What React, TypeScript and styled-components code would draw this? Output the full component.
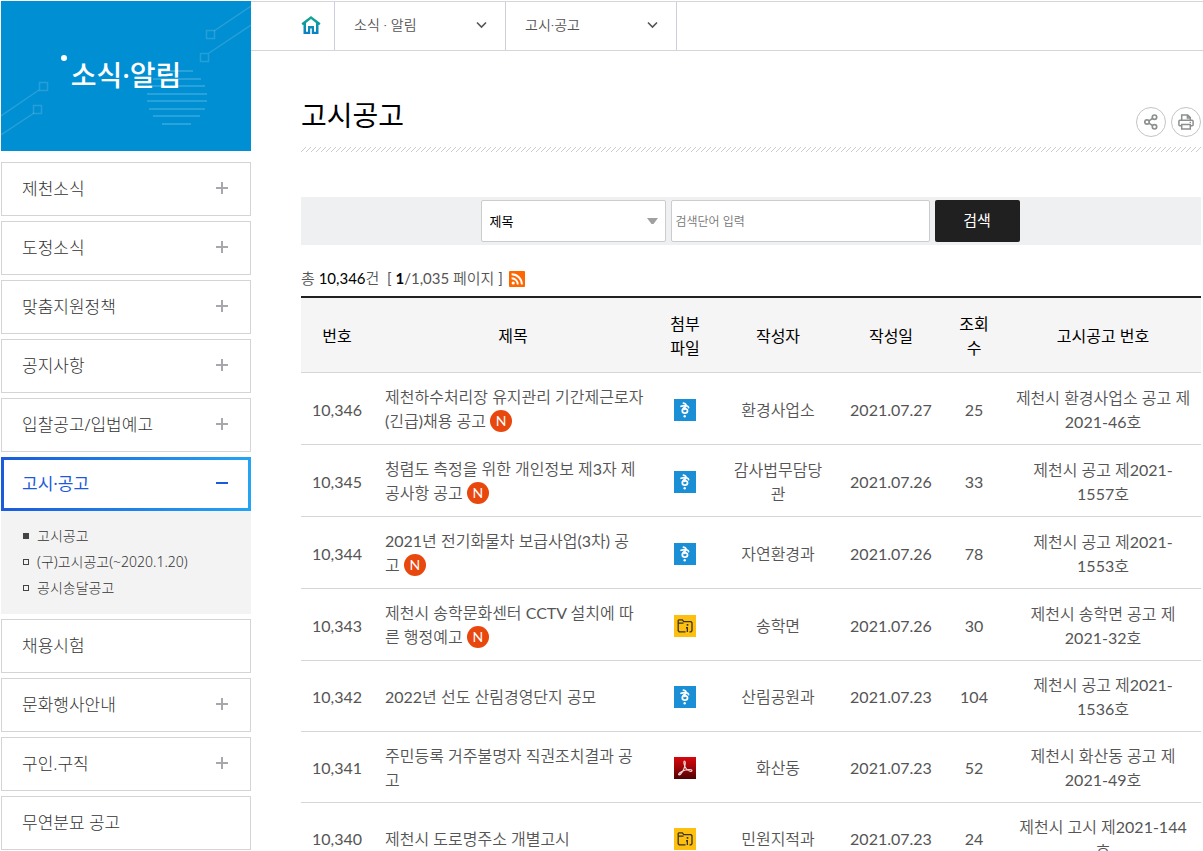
import React from "react";
import styled, { createGlobalStyle, css } from "styled-components";

const latoStack = `Lato, "Noto Sans CJK KR DemiLight", "Noto Sans CJK KR", sans-serif`;
const notoStack = `"Noto Sans", "Noto Sans CJK KR", sans-serif`;

const GlobalStyle = createGlobalStyle`
  *, *::before, *::after { box-sizing: border-box; }
  body {
    margin: 0;
    background: #fff;
    color: #555;
    font: 400 16px/24px ${latoStack};
  }
  a { color: inherit; text-decoration: none; }
  ul { list-style: none; margin: 0; padding: 0; }
  button, input, select { font-family: inherit; }
  svg { display: block; }
`;

const Page = styled.div`
  display: flex;
  align-items: flex-start;
  padding: 1px 0 0 1px;
`;

/* ---------- sidebar ---------- */

const Sidebar = styled.aside`
  flex: 0 0 250px;
  font-family: ${notoStack};
  font-weight: 300;
`;

const Banner = styled.div`
  position: relative;
  display: flex;
  align-items: center;
  justify-content: center;
  height: 150px;
  margin-bottom: 11px;
  padding-bottom: 2px;
  background: #008fd3;
`;

const BannerArt = styled.svg`
  position: absolute;
  inset: 0;
`;

const BannerTitle = styled.h2`
  position: relative;
  margin: 0;
  color: #fff;
  font-size: 28px;
  line-height: 40px;
  font-weight: 500;
`;

const Menu = styled.ul`
  display: flex;
  flex-direction: column;
  gap: 5px;
`;

const MenuLink = styled.a<{ $active?: boolean }>`
  display: flex;
  align-items: center;
  justify-content: space-between;
  height: 54px;
  padding: 0 22px 0 20px;
  border: 1px solid #d4d4d6;
  color: #333;
  font-size: 17px;
  line-height: 24px;
  & > svg { margin-bottom: 2px; }
  ${(p) =>
    p.$active &&
    css`
      padding: 0 19px 0 18px;
      border: 3px solid transparent;
      background: linear-gradient(#fff, #fff) padding-box,
        linear-gradient(to right, #1b5bdb, #23a4f5) border-box;
      color: #1b5bdb;
      font-weight: 400;
    `}
`;

const SubMenu = styled.ul`
  padding: 12px 22px 13px;
  background: #f3f3f3;
`;

const SubLink = styled.a<{ $current?: boolean }>`
  display: flex;
  align-items: center;
  gap: 8px;
  color: #333;
  font-size: 14px;
  line-height: 26px;
  &::before {
    content: "";
    width: 6px;
    height: 6px;
    border: 1px solid #444;
    background: ${(p) => (p.$current ? "#444" : "transparent")};
  }
`;

/* ---------- main ---------- */

const Main = styled.main`
  flex: 1;
  min-width: 0;
`;

const Crumbs = styled.nav`
  display: flex;
  height: 50px;
  border: solid #d5d6d9;
  border-width: 1px 0;
`;

const HomeLink = styled.a`
  display: flex;
  align-items: center;
  padding: 0 13px 2px 50px;
  border-right: 1px solid #cdd0dc;
`;

const Crumb = styled.button`
  display: flex;
  align-items: center;
  justify-content: space-between;
  width: 171px;
  padding: 0 18px 2px 19px;
  border: 0;
  border-right: 1px solid #cdd0dc;
  background: none;
  color: #555;
  font-size: 14px;
  font-weight: 300;
  line-height: 24px;
`;

const Content = styled.div`
  padding: 0 2px 0 50px;
`;

const TitleBar = styled.header`
  display: flex;
  align-items: flex-end;
  justify-content: space-between;
  padding: 42px 0 10px;
  margin-bottom: 45px;
  position: relative;
  &::after {
    content: "";
    position: absolute;
    left: 0;
    right: 0;
    top: 100%;
    height: 5px;
    background: linear-gradient(135deg, transparent 42%, #ccc 42%, #ccc 58%, transparent 58%) 0 0 / 5px 5px;
  }
`;

const PageTitle = styled.h1`
  margin: 0;
  color: #000;
  font-family: ${notoStack};
  font-size: 28px;
  line-height: 44px;
  font-weight: 400;
`;

const Tools = styled.div`
  display: flex;
  gap: 5px;
`;

const RoundButton = styled.button`
  display: flex;
  align-items: center;
  justify-content: center;
  width: 30px;
  height: 30px;
  padding: 0;
  border: 1px solid #c4c4c4;
  border-radius: 50%;
  background: #fff;
`;

const SearchBar = styled.form`
  display: flex;
  align-items: center;
  justify-content: center;
  gap: 5px;
  height: 48px;
  margin-top: 50px;
  padding-right: 2px;
  background: #eff0f2;
`;

const SelectWrap = styled.div`
  display: grid;
  align-items: center;
  width: 185px;
  & > * { grid-area: 1 / 1; }
  & > svg { justify-self: end; margin-right: 8px; pointer-events: none; }
`;

const FieldSelect = styled.select`
  appearance: none;
  width: 100%;
  height: 42px;
  padding: 0 8px;
  border: 1px solid #ccc;
  border-radius: 2px;
  background: #fff;
  color: #000;
  font-family: ${notoStack};
  font-size: 13px;
  font-weight: 400;
`;

const SearchInput = styled.input`
  width: 259px;
  height: 42px;
  padding: 0 4px;
  border: 1px solid #ccc;
  border-radius: 2px;
  background: #fff;
  font-size: 12px;
  font-weight: 400;
  &::placeholder { color: #757575; }
`;

const SearchButton = styled.button`
  width: 85px;
  height: 42px;
  padding: 0 0 3px;
  border: 0;
  border-radius: 2px;
  background: #202020;
  color: #fff;
  font-family: ${notoStack};
  font-size: 15px;
  font-weight: 400;
`;

const Total = styled.div`
  display: flex;
  align-items: center;
  gap: 6px;
  margin: 21px 0 5px;
  font-size: 15px;
  line-height: 24px;
  white-space: pre;
  & > span { padding-bottom: 1px; }
`;

const Count = styled.span`
  color: #000;
`;

const Current = styled.strong`
  color: #000;
  font-weight: 700;
`;

const Board = styled.table`
  width: 100%;
  table-layout: fixed;
  border-collapse: separate;
  border-spacing: 0;
  border-top: 2px solid #202020;
`;

const Col = styled.col<{ $w?: number }>`
  width: ${(p) => (p.$w ? p.$w + "px" : "auto")};
`;

const Th = styled.th`
  padding: 14px 10px 12px;
  border-bottom: 1px solid #d6d6d6;
  background: #f5f5f5;
  color: #000;
  font-family: Lato, "Noto Sans CJK KR", sans-serif;
  font-weight: 400;
`;

const Td = styled.td<{ $left?: boolean }>`
  padding: ${(p) => (p.$left ? "12px 7px 10px 12px" : "12px 10px 10px")};
  border-bottom: 1px solid #d6d6d6;
  text-align: ${(p) => (p.$left ? "left" : "center")};
  & > svg { margin: 0 auto; }
`;

const NoticeLink = styled.a`
  white-space: pre-line;
`;

const NewBadge = styled.span`
  display: inline-block;
  width: 22px;
  height: 22px;
  margin: 1px 0 2px;
  border-radius: 50%;
  background: #e8470e;
  color: #fff;
  font-size: 14px;
  line-height: 22px;
  text-align: center;
  vertical-align: top;
`;

/* ---------- icons ---------- */

const Plus = () => (
  <svg width="12" height="12" viewBox="0 0 12 12" aria-hidden="true">
    <path d="M5 0h2v12H5zM0 5h12v2H0z" fill="#a6a8ac" />
  </svg>
);

const Minus = () => (
  <svg width="13" height="12" viewBox="0 0 13 12" aria-hidden="true">
    <path d="M0 5h12v2H0z" fill="#1b5bdb" />
  </svg>
);

const Chevron = () => (
  <svg width="11" height="8" viewBox="0 0 11 8" aria-hidden="true">
    <path d="M1 1.5l4.5 4.5L10 1.5" fill="none" stroke="#555" strokeWidth="1.6" />
  </svg>
);

const HomeIcon = () => (
  <svg width="20" height="18" viewBox="0 0 20 18" role="img" aria-label="홈">
    <defs>
      <linearGradient id="homeFill" x1="0" y1="0" x2="0" y2="1">
        <stop offset="0" stopColor="#12ab8c" />
        <stop offset="1" stopColor="#0a7fc9" />
      </linearGradient>
    </defs>
    <path
      d="M10 0L0.5 7.3l1.3 2 .7-.5V18h6.7v-5.6h1.6V18h6.7V8.8l.7.5 1.3-2zM10 3l5 4v8.8h-2V10H7v5.8H5V7z"
      fill="url(#homeFill)"
    />
  </svg>
);

const ShareIcon = () => (
  <svg width="15" height="16" viewBox="0 0 15 16" fill="none" stroke="#8c8f90" strokeWidth="1.7" aria-hidden="true">
    <circle cx="3" cy="8" r="2.2" />
    <circle cx="10.5" cy="3.2" r="2.2" />
    <circle cx="10.5" cy="12.8" r="2.2" />
    <path d="M5 6.9l3.6-2.5M5 9.1l3.6 2.5" />
  </svg>
);

const PrintIcon = () => (
  <svg width="16" height="16" viewBox="0 0 16 16" fill="none" stroke="#8c8f90" strokeWidth="1.5" aria-hidden="true">
    <path d="M3.7 6.2V1h6l2.6 2.6v2.6M9.4 1v3h2.8" />
    <rect x="0.9" y="6.2" width="14.2" height="5.6" rx="1" />
    <path d="M3.7 10.6h8.6V15H3.7z" fill="#fff" />
    <path d="M11.6 8.4h1.4" strokeWidth="1.2" />
  </svg>
);

const Caret = () => (
  <svg width="11" height="6" viewBox="0 0 11 6" aria-hidden="true">
    <path d="M0 0h11L6.5 6h-2z" fill="#a0a0a0" />
  </svg>
);

const RssIcon = () => (
  <svg width="16" height="16" viewBox="0 0 16 16" role="img" aria-label="RSS">
    <rect width="16" height="16" rx="1" fill="#f60" />
    <circle cx="4.2" cy="12" r="1.6" fill="#fff" />
    <path d="M2.6 7.2a6.2 6.2 0 0 1 6.2 6.3M2.6 3.2a10.3 10.3 0 0 1 10.3 10.3" fill="none" stroke="#fff" strokeWidth="1.9" />
  </svg>
);

type FileKind = "hwp" | "zip" | "pdf";

const FileIcon = ({ kind }: { kind: FileKind }) => {
  if (kind === "hwp")
    return (
      <svg width="22" height="22" viewBox="0 0 22 22" role="img" aria-label="한글 파일">
        <rect width="22" height="22" fill="#1b8fd6" />
        <g fill="none" stroke="#fff" strokeLinecap="round">
          <path d="M9.5 4.2c1.3.1 2.1.7 2.5 1.6" strokeWidth="1.8" />
          <path d="M7 7.3c2.2-.8 4.2-.9 5.6-.5 1.1.4 1.9 1 2 1.9" strokeWidth="1.7" />
          <path d="M11.8 7.5c-1.8 1.3-3.5 2.5-3.5 4.2a2.6 2.4 0 0 0 5.2 0c0-1.6-1.7-2.2-2.9-1.4" strokeWidth="1.8" />
        </g>
        <circle cx="10.7" cy="17.3" r="1.2" fill="#fff" />
      </svg>
    );
  if (kind === "zip")
    return (
      <svg width="22" height="22" viewBox="0 0 22 22" role="img" aria-label="압축 파일">
        <rect width="22" height="22" fill="#fdc010" />
        <path d="M11.5 16.8H5.2l-1-1V5.5l.7-.7h3.4l1.5 1.9h7.2l1 1v8.1l-1 1h-1.5M4.2 8.2h5.3" fill="none" stroke="#3a3320" strokeWidth="1.3" />
        <path d="M12.7 9h1.6v1.8h-1.6zM12 12h2v5h-1.3v-3.5H12z" fill="#3a3320" />
      </svg>
    );
  return (
    <svg width="22" height="22" viewBox="0 0 22 22" role="img" aria-label="PDF 파일">
      <defs>
        <linearGradient id="pdfFill" x1="0" y1="0" x2="0" y2="1">
          <stop offset="0" stopColor="#d8070c" />
          <stop offset="0.5" stopColor="#9c0508" />
          <stop offset="1" stopColor="#4a0303" />
        </linearGradient>
      </defs>
      <rect width="22" height="22" fill="url(#pdfFill)" />
      <path
        d="M10.2 4.2c1.4-.3 1.2 2.6.7 4.7-.9 3.6-3.8 8.7-5.6 9-1.6 0-.4-2 2-3.2 3-1.5 7.6-2.5 9.8-1.9 1.6.6.7 2-1 1.5-2.6-.8-5.2-3.8-6-7.2-.3-1.5-.4-2.7.1-2.9z"
        fill="none"
        stroke="#f3dada"
        strokeWidth="1.1"
      />
    </svg>
  );
};

const globeLines: [number, number, number][] = [
  [70, 161, 192], [78, 152, 200], [85, 148, 204], [93, 146, 206],
  [100, 146, 206], [108, 148, 204], [115, 152, 199], [123, 161, 190],
];

const BannerDrawing = () => (
  <BannerArt width="250" height="150" viewBox="0 0 250 150" aria-hidden="true">
    <g fill="none" stroke="#fff" strokeOpacity="0.15" strokeWidth="1.5">
      <path d="M213 30L250 5M208 52L250 24M0 115l38-26M0 134l33-22" />
      <rect x="205.5" y="29.5" width="8" height="8" />
      <rect x="199.5" y="52.5" width="8" height="8" />
      <rect x="38.5" y="81.5" width="8" height="8" />
      <rect x="32.5" y="104.5" width="8" height="8" />
    </g>
    {globeLines.map(([y, a, b]) => (
      <path key={y} d={`M${a} ${y}H${b}`} stroke="#35a8dd" strokeWidth="1.6" />
    ))}
    <circle cx="63" cy="57" r="3" fill="#fff" />
  </BannerArt>
);

/* ---------- data ---------- */

type MenuEntry = { label: string; expandable?: boolean; children?: string[] };

const menu: MenuEntry[] = [
  { label: "제천소식", expandable: true },
  { label: "도정소식", expandable: true },
  { label: "맞춤지원정책", expandable: true },
  { label: "공지사항", expandable: true },
  { label: "입찰공고/입법예고", expandable: true },
  { label: "고시·공고", children: ["고시공고", "(구)고시공고(~2020.1.20)", "공시송달공고"] },
  { label: "채용시험" },
  { label: "문화행사안내", expandable: true },
  { label: "구인.구직", expandable: true },
  { label: "무연분묘 공고" },
];

const columns: { label: string; w?: number }[] = [
  { label: "번호", w: 72 },
  { label: "제목" },
  { label: "첨부파일", w: 64 },
  { label: "작성자", w: 122 },
  { label: "작성일", w: 104 },
  { label: "조회수", w: 62 },
  { label: "고시공고 번호", w: 196 },
];

type Notice = {
  no: string; title: string; fresh?: boolean; file: FileKind;
  writer: string; date: string; views: number; code: string;
};

const notices: Notice[] = [
  { no: "10,346", title: "제천하수처리장 유지관리 기간제근로자(긴급)채용 공고", fresh: true, file: "hwp", writer: "환경사업소", date: "2021.07.27", views: 25, code: "제천시 환경사업소 공고 제2021-46호" },
  { no: "10,345", title: "청렴도 측정을 위한 개인정보 제3자 제공사항 공고", fresh: true, file: "hwp", writer: "감사법무담당관", date: "2021.07.26", views: 33, code: "제천시 공고 제2021-1557호" },
  { no: "10,344", title: "2021년 전기화물차 보급사업(3차) 공\n고", fresh: true, file: "hwp", writer: "자연환경과", date: "2021.07.26", views: 78, code: "제천시 공고 제2021-1553호" },
  { no: "10,343", title: "제천시 송학문화센터 CCTV 설치에 따른 행정예고", fresh: true, file: "zip", writer: "송학면", date: "2021.07.26", views: 30, code: "제천시 송학면 공고 제2021-32호" },
  { no: "10,342", title: "2022년 선도 산림경영단지 공모", file: "hwp", writer: "산림공원과", date: "2021.07.23", views: 104, code: "제천시 공고 제2021-1536호" },
  { no: "10,341", title: "주민등록 거주불명자 직권조치결과 공고", file: "pdf", writer: "화산동", date: "2021.07.23", views: 52, code: "제천시 화산동 공고 제2021-49호" },
  { no: "10,340", title: "제천시 도로명주소 개별고시", file: "zip", writer: "민원지적과", date: "2021.07.23", views: 24, code: "제천시 고시 제2021-144호" },
];

export default function App() {
  return (
    <>
      <GlobalStyle />
      <Page>
        <Sidebar>
          <Banner>
            <BannerDrawing />
            <BannerTitle>소식·알림</BannerTitle>
          </Banner>
          <Menu>
            {menu.map((m) => (
              <li key={m.label}>
                <MenuLink href="#" $active={!!m.children}>
                  {m.label}
                  {m.children ? <Minus /> : m.expandable ? <Plus /> : null}
                </MenuLink>
                {m.children && (
                  <SubMenu>
                    {m.children.map((c, i) => (
                      <li key={c}>
                        <SubLink href="#" $current={i === 0}>{c}</SubLink>
                      </li>
                    ))}
                  </SubMenu>
                )}
              </li>
            ))}
          </Menu>
        </Sidebar>

        <Main>
          <Crumbs>
            <HomeLink href="#"><HomeIcon /></HomeLink>
            <Crumb type="button">소식 · 알림<Chevron /></Crumb>
            <Crumb type="button">고시·공고<Chevron /></Crumb>
          </Crumbs>
          <Content>
            <TitleBar>
              <PageTitle>고시공고</PageTitle>
              <Tools>
                <RoundButton type="button" aria-label="공유"><ShareIcon /></RoundButton>
                <RoundButton type="button" aria-label="인쇄"><PrintIcon /></RoundButton>
              </Tools>
            </TitleBar>

            <SearchBar onSubmit={(e) => e.preventDefault()}>
              <SelectWrap>
                <FieldSelect aria-label="검색 구분" defaultValue="제목">
                  <option>제목</option>
                </FieldSelect>
                <Caret />
              </SelectWrap>
              <SearchInput type="text" aria-label="검색단어" placeholder="검색단어 입력" />
              <SearchButton type="submit">검색</SearchButton>
            </SearchBar>

            <Total>
              <span>총 <Count>10,346</Count>건  [ <Current>1</Current>/1,035 페이지 ]</span>
              <a href="#"><RssIcon /></a>
            </Total>

            <Board>
              <colgroup>
                {columns.map((c) => <Col key={c.label} $w={c.w} />)}
              </colgroup>
              <thead>
                <tr>{columns.map((c) => <Th key={c.label} scope="col">{c.label}</Th>)}</tr>
              </thead>
              <tbody>
                {notices.map((n) => (
                  <tr key={n.no}>
                    <Td>{n.no}</Td>
                    <Td $left>
                      <NoticeLink href="#">{n.title}</NoticeLink>
                      {n.fresh && <> <NewBadge>N</NewBadge></>}
                    </Td>
                    <Td><FileIcon kind={n.file} /></Td>
                    <Td>{n.writer}</Td>
                    <Td>{n.date}</Td>
                    <Td>{n.views}</Td>
                    <Td>{n.code}</Td>
                  </tr>
                ))}
              </tbody>
            </Board>
          </Content>
        </Main>
      </Page>
    </>
  );
}
